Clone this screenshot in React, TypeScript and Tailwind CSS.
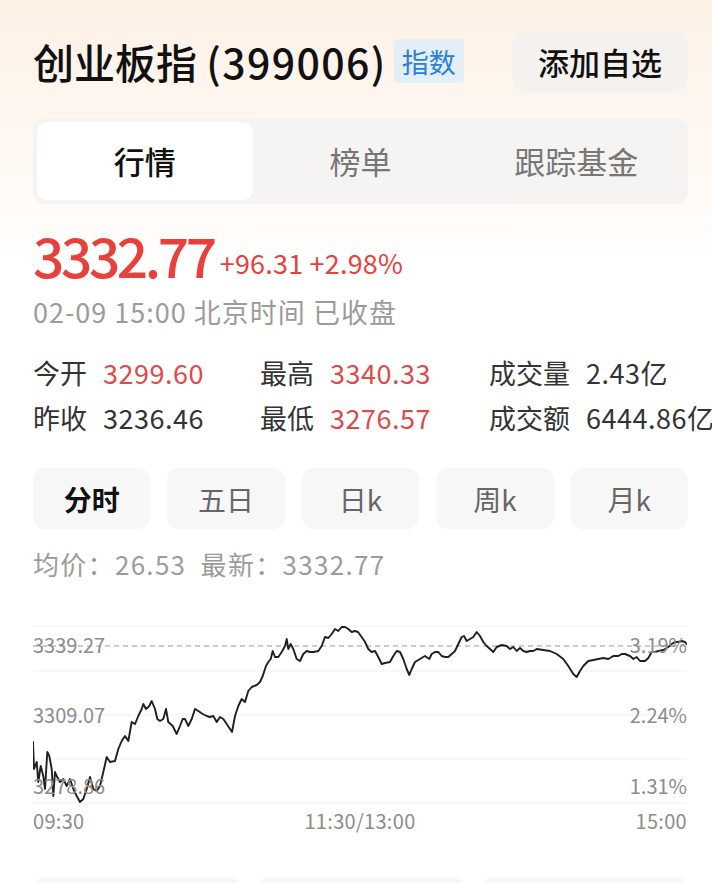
const pts: [number, number][] = [
  [33, 743], [34, 770], [36.7, 763], [38.3, 783], [40.7, 767], [43.3, 777], [45, 790], [47.3, 753],
  [49.3, 757], [51.7, 770], [53.3, 797], [55, 773], [56.7, 777], [60, 783], [63.3, 780], [66.7, 787],
  [70, 780], [73.3, 790], [76.7, 797], [80, 803], [83.3, 800], [86.7, 790], [90, 778], [93.3, 790],
  [96.7, 792], [100, 787], [103.3, 773], [106.7, 758], [110, 763], [115, 762], [118.3, 750], [121.7, 742],
  [125, 737], [128.3, 742], [131.7, 723], [135, 725], [138.3, 717], [141.7, 710], [143.3, 705], [146, 710],
  [149.3, 707], [151.7, 702], [155, 710], [157.3, 720], [160, 722], [163.3, 720], [166, 710], [168.3, 723],
  [172.7, 727], [176.7, 735], [180, 727], [182.7, 720], [185, 720], [188.3, 727], [191.7, 720], [195, 710],
  [198.3, 712], [202.7, 715], [206.7, 717], [210, 718], [213.3, 717], [216.7, 723], [220, 718], [223.3, 720],
  [226.7, 725], [230, 730], [232, 733], [235, 717], [238.3, 707], [241.7, 700], [245, 703], [248.3, 692],
  [251.7, 688], [256.7, 686], [260, 683], [262.7, 677], [266, 667], [268.3, 663], [270.7, 660], [272.7, 652],
  [275, 658], [278.3, 658], [281.7, 653], [285, 647], [286.7, 640], [288.3, 650], [290.7, 645], [293.3, 650],
  [296.7, 660], [300, 662], [303.3, 655], [306.7, 652], [310, 653], [313.3, 653], [318.3, 652], [321.7, 647],
  [325, 638], [328.3, 639], [331.7, 635], [335, 630], [338.3, 632], [341.7, 628], [345, 628], [348.3, 630],
  [351.7, 633], [355, 632], [358, 633], [361.7, 638], [365, 643], [368.3, 650], [371.7, 653], [375, 652],
  [378.3, 658], [381.7, 665], [385, 664], [390, 663], [393.3, 657], [396.7, 652], [400, 653], [403.3, 660],
  [406.7, 670], [409.3, 676], [411.7, 670], [415, 663], [420, 660], [425, 657], [429.3, 660], [431.7, 655],
  [435, 653], [438.3, 653], [441.7, 657], [445, 658], [448.3, 658], [451.7, 655], [455, 652], [458.3, 645],
  [461.7, 638], [464, 637], [466.7, 642], [470, 640], [473.3, 638], [476.7, 633], [480, 637], [483.3, 643],
  [486.7, 647], [490, 650], [493.3, 653], [496.7, 648], [501.7, 646], [506.7, 647], [510, 650], [513.3, 648],
  [516.7, 652], [520, 649], [523.3, 652], [526.7, 653], [530, 652], [533.3, 652], [536.7, 650], [543.3, 651],
  [550, 652], [556.7, 655], [563.3, 660], [568.3, 667], [573.3, 675], [576.7, 678], [580, 672], [583.3, 667],
  [588.3, 662], [593.3, 661], [598.3, 660], [603.3, 659], [608.3, 660], [613.3, 657], [618.3, 657], [621.7, 655],
  [625, 655], [630, 657], [633.3, 660], [636.7, 658], [640, 662], [645, 662], [648.3, 659], [651.7, 653],
  [655, 653], [658.3, 652], [663.3, 651], [668.3, 648], [671.7, 645], [675, 643], [678.3, 643], [681.7, 642],
  [685, 643], [686.7, 645],
];

const stats = [
  [
    { label: "今开", value: "3299.60", red: true },
    { label: "昨收", value: "3236.46", red: false },
  ],
  [
    { label: "最高", value: "3340.33", red: true },
    { label: "最低", value: "3276.57", red: true },
  ],
  [
    { label: "成交量", value: "2.43亿", red: false },
    { label: "成交额", value: "6444.86亿", red: false },
  ],
];

const periods = ["分时", "五日", "日k", "周k", "月k"];

const App = () => {
  return (
    <div
      className="w-[712px] h-[883px] overflow-hidden bg-gradient-to-b from-[#fdf1e6] via-[#fffaf6] via-[22%] to-white to-[30%] text-[#111]"
      style={{ fontFamily: '"Noto Sans CJK SC", "Noto Sans", sans-serif' }}
    >
      {/* header */}
      <div className="flex items-center justify-between pl-[33px] pr-[24px] pt-[30px]">
        <div className="flex items-center">
          <h1 className="text-[41px] leading-none font-medium whitespace-nowrap">
            创业板指 <span className="tracking-[1.4px]">(399006)</span>
          </h1>
          <span className="ml-[7px] h-[44px] px-[8px] flex items-center rounded-[4px] bg-[#e4eef8] text-[#2b7fd6] text-[27px] leading-none">
            指数
          </span>
        </div>
        <button className="h-[62px] w-[176px] rounded-[14px] bg-[#f4f1ee] text-[31px] font-medium leading-none">
          添加自选
        </button>
      </div>

      {/* tabs */}
      <div className="ml-[33px] mr-[24px] mt-[26px] h-[86px] rounded-[12px] bg-[#f5f4f3] p-[4px] grid grid-cols-3">
        <div className="rounded-[10px] bg-white flex items-center justify-center text-[31px] font-medium">行情</div>
        <div className="flex items-center justify-center text-[31px] text-[#777]">榜单</div>
        <div className="flex items-center justify-center text-[31px] text-[#777]">跟踪基金</div>
      </div>

      {/* price */}
      <div className="px-[33px] mt-[20px] flex items-end text-[#e8413d] whitespace-nowrap">
        <span className="text-[55px] leading-[60px] font-medium tracking-[-3.4px]">3332.77</span>
        <span className="ml-[6px] mb-[5px] text-[27px] leading-[32px] tracking-[0.2px]">+96.31 +2.98%</span>
      </div>
      <div className="px-[33px] mt-[11px] text-[27px] leading-[34px] tracking-[1px] text-[#9b9b9b] whitespace-nowrap">
        02-09 15:00 北京时间 已收盘
      </div>

      {/* stats */}
      <div className="pl-[33px] mt-[21px] flex text-[27px] leading-[45px] whitespace-nowrap">
        {stats.map((col, i) => (
          <div key={i} className={i === 0 ? "w-[227px] shrink-0" : i === 1 ? "w-[229px] shrink-0" : "shrink-0"}>
            {col.map((s) => (
              <div key={s.label} className="flex">
                <span className="text-[#333]">{s.label}</span>
                <span className={`ml-[16px] tracking-[0.5px] ${s.red ? "text-[#df4a4a]" : "text-[#333]"}`}>
                  {s.value}
                </span>
              </div>
            ))}
          </div>
        ))}
      </div>

      {/* period buttons */}
      <div className="ml-[33px] mr-[24px] mt-[28px] grid grid-cols-5 gap-[17px]">
        {periods.map((p, i) => (
          <div
            key={p}
            className={`h-[61px] rounded-[12px] bg-[#f7f7f7] flex items-center justify-center text-[28px] ${
              i === 0 ? "font-bold text-[#111]" : "text-[#666]"
            }`}
          >
            {p}
          </div>
        ))}
      </div>
      <div className="px-[33px] mt-[18px] text-[26px] leading-[34px] tracking-[1.3px] text-[#9b9b9b] whitespace-pre">
        {"均价：26.53  最新：3332.77"}
      </div>

      {/* chart */}
      <div className="relative ml-[33px] mr-[25px] mt-[28px] h-[200px]">
        <svg className="absolute inset-0" width="654" height="200" viewBox="33 610 654 200">
          {[627, 672, 716, 760, 804].map((y) => (
            <line key={y} x1="33" x2="687" y1={y} y2={y} stroke="#f1f1f1" strokeWidth="1" />
          ))}
          <line x1="33" x2="687" y1="647" y2="647" stroke="#9a9a9a" strokeWidth="1.2" strokeDasharray="5 4" />
          <polyline
            points={pts.map((p) => p.join(",")).join(" ")}
            fill="none"
            stroke="#1f1f1f"
            strokeWidth="1.9"
            strokeLinejoin="round"
            strokeLinecap="round"
          />
        </svg>
        <span className="absolute left-0 top-[26px] text-[20px] leading-none text-[#8c8c8c]">3339.27</span>
        <span className="absolute left-0 top-[96px] text-[20px] leading-none text-[#8c8c8c]">3309.07</span>
        <span className="absolute left-0 top-[167px] text-[20px] leading-none text-[#8c8c8c]">3278.86</span>
        <span className="absolute right-0 top-[26px] text-[20px] leading-none text-[#8c8c8c]">3.19%</span>
        <span className="absolute right-0 top-[96px] text-[20px] leading-none text-[#8c8c8c]">2.24%</span>
        <span className="absolute right-0 top-[167px] text-[20px] leading-none text-[#8c8c8c]">1.31%</span>
      </div>
      <div className="ml-[33px] mr-[25px] flex justify-between text-[20px] leading-[24px] tracking-[0.3px] text-[#8c8c8c]">
        <span>09:30</span>
        <span>11:30/13:00</span>
        <span>15:00</span>
      </div>

      {/* bottom cards */}
      <div className="ml-[33px] mr-[24px] mt-[44px] grid grid-cols-3 gap-[17px]">
        <div className="h-[60px] rounded-[12px] bg-[#f7f7f7]" />
        <div className="h-[60px] rounded-[12px] bg-[#f7f7f7]" />
        <div className="h-[60px] rounded-[12px] bg-[#f7f7f7]" />
      </div>
    </div>
  );
};

export default App;
